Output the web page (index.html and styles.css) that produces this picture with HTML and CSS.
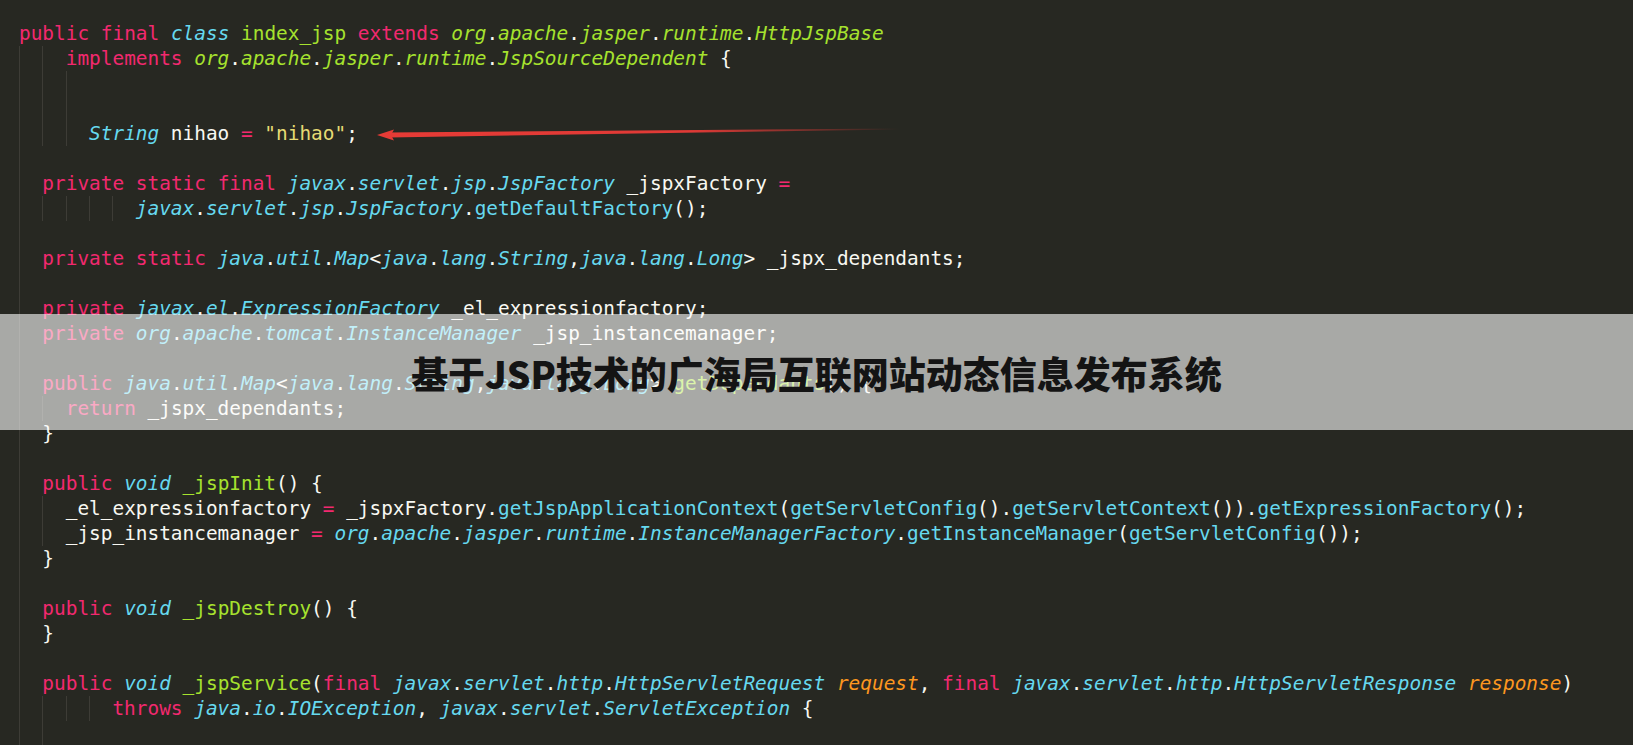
FILE: index.html
```html
<!DOCTYPE html>
<html lang="zh">
<head>
<meta charset="utf-8">
<title>基于JSP技术的广海局互联网站动态信息发布系统</title>
<link rel="stylesheet" href="styles.css">
</head>
<body>
<div class="editor">
  <div class="code">
    <div class="ln"><span class="k">public</span> <span class="k">final</span> <span class="t">class</span> <span class="g">index_jsp</span> <span class="k">extends</span> <span class="gi">org</span>.<span class="gi">apache</span>.<span class="gi">jasper</span>.<span class="gi">runtime</span>.<span class="gi">HttpJspBase</span></div>
    <div class="ln"><span class="ig"></span><span class="ig"></span><span class="k">implements</span> <span class="gi">org</span>.<span class="gi">apache</span>.<span class="gi">jasper</span>.<span class="gi">runtime</span>.<span class="gi">JspSourceDependent</span> {</div>
    <div class="ln"><span class="ig"></span><span class="ig"></span><span class="ig"></span></div>
    <div class="ln"><span class="ig"></span><span class="ig"></span><span class="ig"></span></div>
    <div class="ln"><span class="ig"></span><span class="ig"></span><span class="ig"></span><span class="t">String</span> nihao <span class="k">=</span> <span class="s">"nihao"</span>;</div>
    <div class="ln"><span class="ig"></span></div>
    <div class="ln"><span class="ig"></span><span class="k">private</span> <span class="k">static</span> <span class="k">final</span> <span class="t">javax</span>.<span class="t">servlet</span>.<span class="t">jsp</span>.<span class="t">JspFactory</span> _jspxFactory <span class="k">=</span></div>
    <div class="ln"><span class="ig"></span><span class="ig"></span><span class="ig"></span><span class="ig"></span><span class="ig"></span><span class="t">javax</span>.<span class="t">servlet</span>.<span class="t">jsp</span>.<span class="t">JspFactory</span>.<span class="f">getDefaultFactory</span>();</div>
    <div class="ln"><span class="ig"></span></div>
    <div class="ln"><span class="ig"></span><span class="k">private</span> <span class="k">static</span> <span class="t">java</span>.<span class="t">util</span>.<span class="t">Map</span>&lt;<span class="t">java</span>.<span class="t">lang</span>.<span class="t">String</span>,<span class="t">java</span>.<span class="t">lang</span>.<span class="t">Long</span>&gt; _jspx_dependants;</div>
    <div class="ln"><span class="ig"></span></div>
    <div class="ln"><span class="ig"></span><span class="k">private</span> <span class="t">javax</span>.<span class="t">el</span>.<span class="t">ExpressionFactory</span> _el_expressionfactory;</div>
    <div class="ln"><span class="ig"></span><span class="k">private</span> <span class="t">org</span>.<span class="t">apache</span>.<span class="t">tomcat</span>.<span class="t">InstanceManager</span> _jsp_instancemanager;</div>
    <div class="ln"><span class="ig"></span></div>
    <div class="ln"><span class="ig"></span><span class="k">public</span> <span class="t">java</span>.<span class="t">util</span>.<span class="t">Map</span>&lt;<span class="t">java</span>.<span class="t">lang</span>.<span class="t">String</span>,<span class="t">java</span>.<span class="t">lang</span>.<span class="t">Long</span>&gt; <span class="g">getDependants</span>() {</div>
    <div class="ln"><span class="ig"></span><span class="ig"></span><span class="k">return</span> _jspx_dependants;</div>
    <div class="ln"><span class="ig"></span>}</div>
    <div class="ln"><span class="ig"></span></div>
    <div class="ln"><span class="ig"></span><span class="k">public</span> <span class="t">void</span> <span class="g">_jspInit</span>() {</div>
    <div class="ln"><span class="ig"></span><span class="ig"></span>_el_expressionfactory <span class="k">=</span> _jspxFactory.<span class="f">getJspApplicationContext</span>(<span class="f">getServletConfig</span>().<span class="f">getServletContext</span>()).<span class="f">getExpressionFactory</span>();</div>
    <div class="ln"><span class="ig"></span><span class="ig"></span>_jsp_instancemanager <span class="k">=</span> <span class="t">org</span>.<span class="t">apache</span>.<span class="t">jasper</span>.<span class="t">runtime</span>.<span class="t">InstanceManagerFactory</span>.<span class="f">getInstanceManager</span>(<span class="f">getServletConfig</span>());</div>
    <div class="ln"><span class="ig"></span>}</div>
    <div class="ln"><span class="ig"></span></div>
    <div class="ln"><span class="ig"></span><span class="k">public</span> <span class="t">void</span> <span class="g">_jspDestroy</span>() {</div>
    <div class="ln"><span class="ig"></span>}</div>
    <div class="ln"><span class="ig"></span></div>
    <div class="ln"><span class="ig"></span><span class="k">public</span> <span class="t">void</span> <span class="g">_jspService</span>(<span class="k">final</span> <span class="t">javax</span>.<span class="t">servlet</span>.<span class="t">http</span>.<span class="t">HttpServletRequest</span> <span class="p">request</span>, <span class="k">final</span> <span class="t">javax</span>.<span class="t">servlet</span>.<span class="t">http</span>.<span class="t">HttpServletResponse</span> <span class="p">response</span>)</div>
    <div class="ln"><span class="ig"></span><span class="ig"></span><span class="ig"></span><span class="ig"></span><span class="k">throws</span> <span class="t">java</span>.<span class="t">io</span>.<span class="t">IOException</span>, <span class="t">javax</span>.<span class="t">servlet</span>.<span class="t">ServletException</span> {</div>
    <div class="ln"><span class="ig"></span><span class="ig"></span></div>
  </div>

  <svg class="arrow" width="1633" height="745" viewBox="0 0 1633 745" aria-hidden="true">
    <defs>
      <linearGradient id="fade" x1="377" y1="0" x2="900" y2="0" gradientUnits="userSpaceOnUse">
        <stop offset="0" stop-color="#e63b36"/>
        <stop offset="0.6" stop-color="#e03a36"/>
        <stop offset="1" stop-color="#e03a36" stop-opacity="0"/>
      </linearGradient>
    </defs>
    <polygon points="388,132.6 900,128.4 900,129.4 388,137.4" fill="url(#fade)"/>
    <polygon points="377,135 394,129.5 391,135 394,140.5" fill="#e63b36"/>
  </svg>

  <div class="band">
    <h1 class="title">基于JSP技术的广海局互联网站动态信息发布系统</h1>
  </div>
</div>
</body>
</html>
```

FILE: styles.css
```css
html, body {
  margin: 0;
  padding: 0;
  background: #272822;
}

.editor {
  position: relative;
  width: 1633px;
  height: 745px;
  overflow: hidden;
  background: #272822;
}

.code {
  padding: 21px 0 0 19px;
  font-family: "DejaVu Sans Mono", "Liberation Mono", monospace;
  font-size: 19.42px;
  color: #f8f8f2;
}

.ln {
  height: 25px;
  line-height: 25px;
  white-space: pre;
}

.ig {
  display: inline-block;
  box-sizing: border-box;
  width: 2ch;
  height: 25px;
  vertical-align: top;
  border-left: 1px solid #3d3c36;
}

.k { color: #f2296f; }
.t { color: #66d9ef; font-style: italic; }
.g { color: #a6e22e; }
.gi { color: #a6e22e; font-style: italic; }
.s { color: #e6db74; }
.f { color: #66d9ef; }
.p { color: #fd971f; font-style: italic; }

.arrow {
  position: absolute;
  left: 0;
  top: 0;
  pointer-events: none;
}

.band {
  position: absolute;
  left: 0;
  right: 0;
  top: 314px;
  height: 116px;
  background: rgba(255, 255, 255, 0.6);
  display: flex;
  align-items: center;
  justify-content: center;
}

.title {
  margin: 0;
  font-family: "Noto Sans CJK SC", "Noto Sans", sans-serif;
  font-weight: 900;
  font-size: 37px;
  line-height: 1;
  color: #141414;
  letter-spacing: 0;
  padding-top: 2px;
}
```
